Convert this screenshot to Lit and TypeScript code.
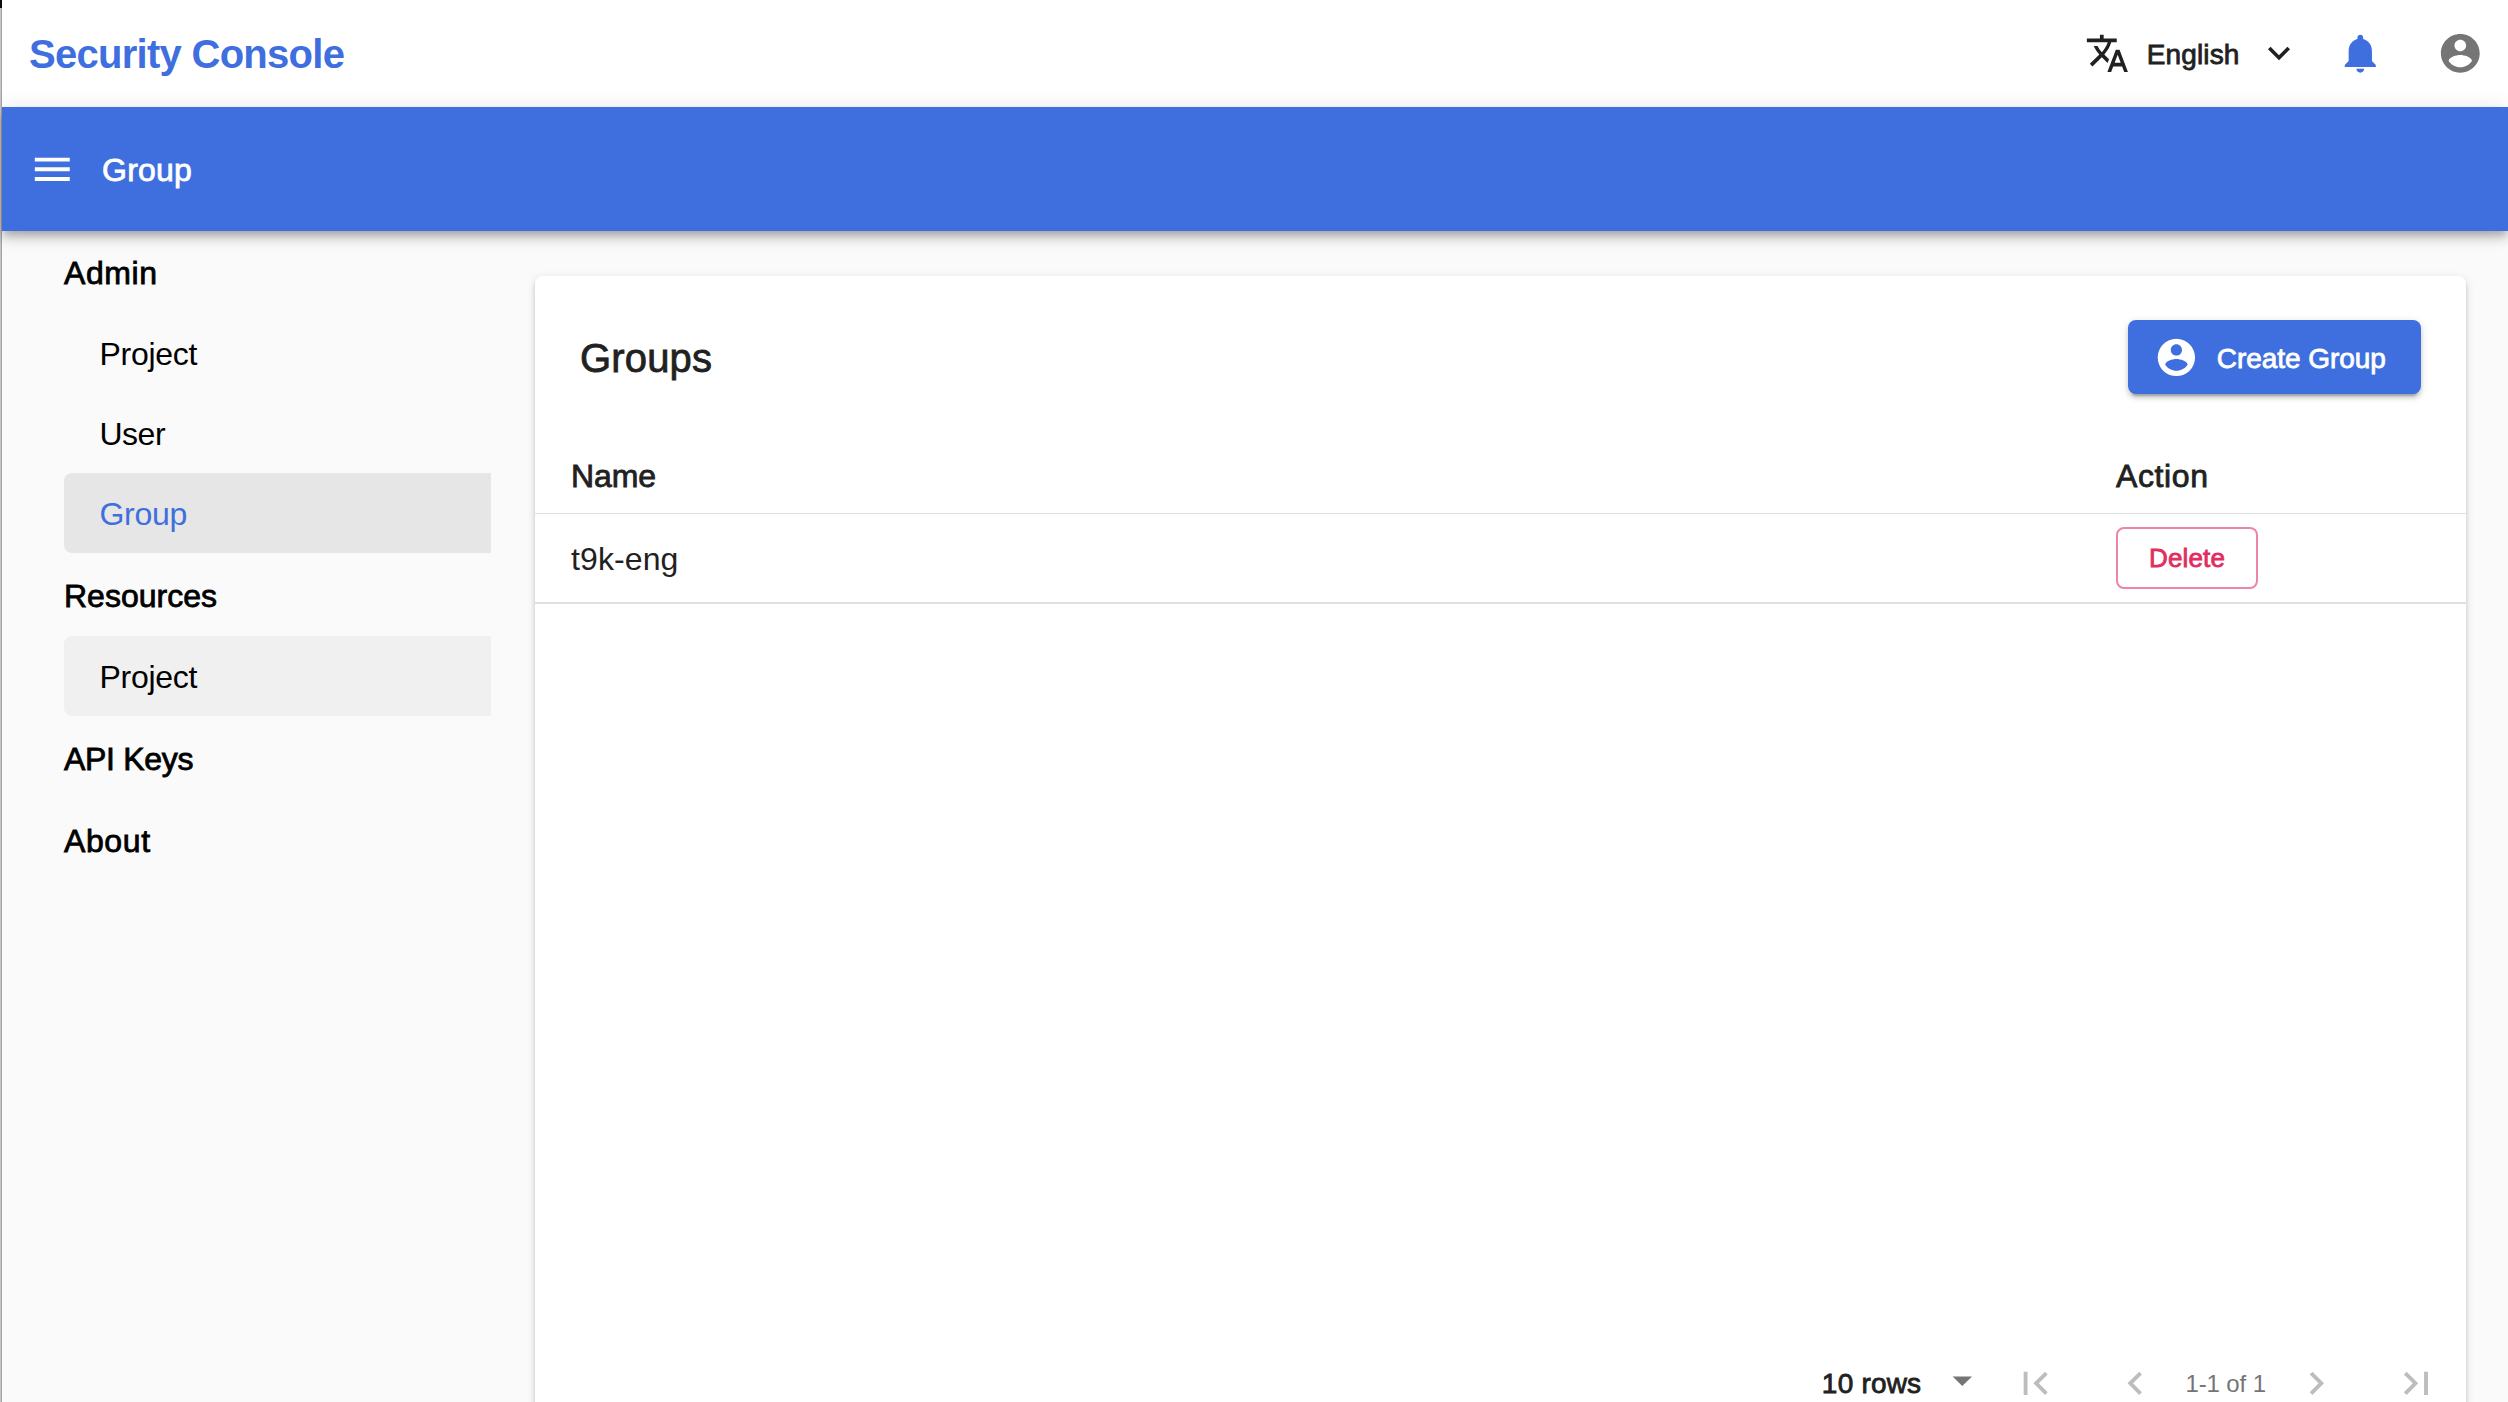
import { LitElement, html, css, svg } from "lit";
import { customElement, property, state } from "lit/decorators.js";
import { classMap } from "lit/directives/class-map.js";

const ICONS: Record<string, string> = {
  translate:
    "M12.87 15.07l-2.54-2.51.03-.03c1.74-1.94 2.98-4.17 3.71-6.53H17V4h-7V2H8v2H1v1.99h11.17C11.5 7.92 10.44 9.75 9 11.35 8.07 10.32 7.3 9.19 6.69 8h-2c.73 1.63 1.73 3.17 2.98 4.56l-5.09 5.02L4 19l5-5 3.11 3.11.76-2.04zM18.5 10h-2L12 22h2l1.12-3h4.75L21 22h2l-4.5-12zm-2.62 7l1.62-4.33L19.12 17h-3.24z",
  expand: "M16.59 8.59L12 13.17 7.41 8.59 6 10l6 6 6-6z",
  bell: "M12 22c1.1 0 2-.9 2-2h-4c0 1.1.89 2 2 2zm6-6v-5c0-3.07-1.64-5.64-4.5-6.32V4c0-.83-.67-1.5-1.5-1.5s-1.5.67-1.5 1.5v.68C7.63 5.36 6 7.92 6 11v5l-2 2v1h16v-1l-2-2z",
  account:
    "M12 2C6.48 2 2 6.48 2 12s4.48 10 10 10 10-4.48 10-10S17.52 2 12 2zm0 3c1.66 0 3 1.34 3 3s-1.34 3-3 3-3-1.34-3-3 1.34-3 3-3zm0 14.2c-2.5 0-4.71-1.28-6-3.22.03-1.99 4-3.08 6-3.08 1.99 0 5.97 1.09 6 3.08-1.29 1.94-3.5 3.22-6 3.22z",
  menu: "M3 18h18v-2H3v2zm0-5h18v-2H3v2zm0-7v2h18V6H3z",
  dropdown: "M7 10l5 5 5-5z",
  first: "M18.41 16.59L13.82 12l4.59-4.59L17 6l-6 6 6 6zM6 6h2v12H6z",
  prev: "M15.41 7.41L14 6l-6 6 6 6 1.41-1.41L10.83 12z",
  next: "M10 6L8.59 7.41 13.17 12l-4.58 4.59L10 18l6-6z",
  last: "M5.59 7.41L10.18 12l-4.59 4.59L7 18l6-6-6-6zM16 6h2v12h-2z",
};

@customElement("ui-icon")
class UiIcon extends LitElement {
  @property() name = "";
  static styles = css`
    :host { display: block; flex: none; width: 46.6px; height: 46.6px; }
    .glyph { display: block; width: 100%; height: 100%; fill: currentColor; }
  `;
  render() {
    return html`<svg class="glyph" viewBox="0 0 24 24">${svg`<path d=${ICONS[this.name]}></path>`}</svg>`;
  }
}

interface NavItem { label: string; cls: string; }
interface NavSection { label: string; cls: string; items: NavItem[]; }

@customElement("app-root")
class AppRoot extends LitElement {
  @state() private selected = "Admin/Group";
  @state() private hovered = "Resources/Project";

  private sections: NavSection[] = [
    {
      label: "Admin", cls: "wide",
      items: [
        { label: "Project", cls: "snug" },
        { label: "User", cls: "tight" },
        { label: "Group", cls: "snug" },
      ],
    },
    { label: "Resources", cls: "", items: [{ label: "Project", cls: "snug" }] },
    { label: "API Keys", cls: "snug", items: [] },
    { label: "About", cls: "wide", items: [] },
  ];

  static styles = css`
    :host {
      display: flex; width: 100%; height: 1402px; overflow: hidden;
      background: #fafafa; color: #212121;
      font-family: "Liberation Sans", Arial, sans-serif; font-size: 32px; line-height: 1.2;
      white-space: nowrap;
    }
    * { box-sizing: border-box; }
    .edge { flex: none; width: 2px; background: #c6c6c6; border-right: 1px solid #a3a3a3; }
    .edge-cap { width: 2px; height: 8px; background: #0c0c0c; }
    .page { flex: 1; min-width: 0; display: flex; flex-direction: column; }
    .medium { -webkit-text-stroke: 0.8px currentColor; }
    .wide { letter-spacing: 0.6px; }
    .snug { letter-spacing: -0.3px; }
    .tight { letter-spacing: -0.5px; }

    .topbar { flex: none; height: 107px; background: #fff; display: flex; align-items: center; padding: 0 24px 0 27px; }
    .brand { flex: 1; font-size: 40px; font-weight: 700; letter-spacing: -0.72px; color: #3f6fde; padding-top: 1px; }
    .language { display: flex; align-items: center; font-size: 28px; letter-spacing: 0.15px; }
    .translate { width: 44.8px; height: 44.8px; }
    .language-name { margin: 2px 0 0 17px; width: 110px; }
    .expand { width: 44px; height: 44px; }
    .bell { color: #3f6fde; margin-left: 36.7px; }
    .account { color: #757575; margin-left: 53.5px; }

    .appbar {
      flex: none; height: 124px; background: #3f6fde; color: #fff; z-index: 1; position: relative;
      display: flex; align-items: center; gap: 26.5px; padding-left: 27px; letter-spacing: 0.2px;
      box-shadow: 0 4px 8px -2px rgba(0,0,0,.2), 0 8px 10px 0 rgba(0,0,0,.14), 0 2px 20px 0 rgba(0,0,0,.12);
    }
    .appbar-title { padding-top: 3px; }

    .body { flex: 1; display: flex; align-items: flex-start; }
    .nav { flex: none; width: 489px; padding-left: 62px; color: #000; }
    .nav-head { height: 82px; display: flex; align-items: center; padding-top: 2px; }
    .nav-group { padding-bottom: 1px; }
    .nav-group.bare { padding-bottom: 0; }
    .nav-item { height: 80px; display: flex; align-items: center; padding: 3px 0 0 35.5px; border-radius: 8px 0 0 8px; cursor: pointer; }
    .nav-item.hover { background: #f0f0f0; }
    .nav-item.selected { background: #e6e6e6; color: #3f6fde; }

    .card {
      flex: 1; height: 1157px; margin: 45px 42px 0 44px; background: #fff; border-radius: 8px;
      display: flex; flex-direction: column;
      box-shadow: 0 6px 2px -4px rgba(0,0,0,.2), 0 4px 4px 0 rgba(0,0,0,.14), 0 2px 10px 0 rgba(0,0,0,.12);
    }
    .card-head { display: flex; justify-content: space-between; align-items: center; padding: 44px 45px 44px 45px; }
    .card-title { font-size: 40px; letter-spacing: 0.15px; padding-top: 2px; }
    .create {
      display: flex; align-items: center; width: 293px; height: 74px; padding-left: 26px; gap: 18px;
      border-radius: 8px; background: #3f6fde; color: #fff; font-size: 28px; letter-spacing: -0.05px;
      box-shadow: 0 6px 2px -4px rgba(0,0,0,.2), 0 4px 4px 0 rgba(0,0,0,.14), 0 2px 10px 0 rgba(0,0,0,.12);
    }
    .create-icon { width: 44.8px; height: 44.8px; }
    .create-label { padding-top: 3px; }
    .row { display: grid; grid-template-columns: 1fr 350px; align-items: center; padding-left: 36px; height: 90px; border-bottom: 2px solid #e0e0e0; }
    .row.head { height: 76px; border-bottom-width: 1px; }
    .cell { padding-top: 3px; letter-spacing: 0.1px; }
    .head .cell { letter-spacing: -0.1px; padding-top: 1px; }
    .head .cell.action { letter-spacing: 0.6px; }
    .delete {
      width: 142px; height: 62px; display: flex; align-items: center; justify-content: center;
      border: 2px solid #ec85a7; border-radius: 8px; color: #e12d5f; font-size: 26px; letter-spacing: 0.15px; padding-top: 2px;
    }
    .spacer { flex: 1; }
    .pager { height: 100px; display: flex; align-items: center; justify-content: flex-end; }
    .rows { font-size: 28px; letter-spacing: 0.2px; padding-top: 1px; margin-right: 17.5px; }
    .dropdown { color: #757575; margin-bottom: 6px; }
    .page-btn { width: 100px; height: 100px; display: flex; align-items: center; justify-content: center; color: #bdbdbd; }
    .range { font-size: 24px; letter-spacing: -0.1px; color: #757575; padding-top: 2px; }
  `;

  private navItem(section: string, item: NavItem) {
    const id = `${section}/${item.label}`;
    const classes = {
      "nav-item": true, [item.cls]: true,
      selected: this.selected === id, hover: this.hovered === id,
    };
    return html`<div class=${classMap(classes)} @click=${() => (this.selected = id)}>${item.label}</div>`;
  }

  private pageButton(name: string) {
    return html`<div class="page-btn"><ui-icon name=${name}></ui-icon></div>`;
  }

  render() {
    return html`
      <div class="edge"><div class="edge-cap"></div></div>
      <div class="page">
        <header class="topbar">
          <div class="brand">Security Console</div>
          <div class="language">
            <ui-icon class="translate" name="translate"></ui-icon>
            <span class="language-name medium">English</span>
            <ui-icon class="expand" name="expand"></ui-icon>
          </div>
          <ui-icon class="bell" name="bell"></ui-icon>
          <ui-icon class="account" name="account"></ui-icon>
        </header>
        <div class="appbar">
          <ui-icon name="menu"></ui-icon>
          <span class="appbar-title medium">Group</span>
        </div>
        <div class="body">
          <nav class="nav">
            ${this.sections.map((s) => html`
              <div class="nav-group ${s.items.length ? "" : "bare"}">
                <div class="nav-head medium ${s.cls}">${s.label}</div>
                ${s.items.map((i) => this.navItem(s.label, i))}
              </div>`)}
          </nav>
          <main class="card">
            <div class="card-head">
              <div class="card-title medium">Groups</div>
              <div class="create">
                <ui-icon class="create-icon" name="account"></ui-icon>
                <span class="create-label medium">Create Group</span>
              </div>
            </div>
            <div class="row head">
              <div class="cell medium">Name</div>
              <div class="cell action medium">Action</div>
            </div>
            <div class="row">
              <div class="cell">t9k-eng</div>
              <div class="delete medium">Delete</div>
            </div>
            <div class="spacer"></div>
            <div class="pager">
              <span class="rows medium">10 rows</span>
              <ui-icon class="dropdown" name="dropdown"></ui-icon>
              ${this.pageButton("first")}
              ${this.pageButton("prev")}
              <span class="range">1-1 of 1</span>
              ${this.pageButton("next")}
              ${this.pageButton("last")}
            </div>
          </main>
        </div>
      </div>
    `;
  }
}
